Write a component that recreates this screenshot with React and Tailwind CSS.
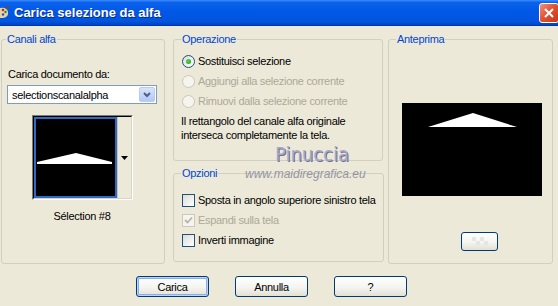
import React from "react";

function Radio({ checked, disabled, label }) {
  return (
    <div className="h-[20px] flex items-center whitespace-nowrap">
      <span
        className={
          disabled
            ? "ml-[1px] w-[13px] h-[13px] rounded-full border border-[#cac8bb] bg-[#f5f4ee]"
            : "ml-[1px] w-[13px] h-[13px] rounded-full border border-[#1c5180] bg-[linear-gradient(135deg,#dcdcd7,#ffffff)] flex items-center justify-center"
        }
      >
        {checked && <span className="w-[5px] h-[5px] rounded-full bg-[radial-gradient(circle_at_40%_40%,#55d655,#1a9a1a)]" />}
      </span>
      <span className={disabled ? "ml-[3px] text-[#aca899]" : "ml-[3px]"}>{label}</span>
    </div>
  );
}

function Check({ checked, disabled, label }) {
  return (
    <div className="h-[20px] flex items-center whitespace-nowrap">
      <span
        className={
          disabled
            ? "shrink-0 ml-[1px] w-[13px] h-[13px] border border-[#cac8bb] bg-[#f5f4ee] flex items-center justify-center"
            : "shrink-0 ml-[1px] w-[13px] h-[13px] border border-[#1c5180] bg-[linear-gradient(135deg,#dcdcd7,#ffffff)]"
        }
      >
        {checked && (
          <svg width="9" height="9" viewBox="0 0 9 9">
            <path d="M1 4 L3.5 6.5 L8 1.5" stroke="#b8b5a6" strokeWidth="1.8" fill="none" />
          </svg>
        )}
      </span>
      <span className={disabled ? "ml-[3px] text-[#aca899]" : "ml-[3px]"}>{label}</span>
    </div>
  );
}

function XpButton({ children, isDefault }) {
  return (
    <button
      className={
        "w-[73px] h-[21px] rounded-[3px] border border-[#003c74] bg-[linear-gradient(to_bottom,#ffffff,#f4f4f0_55%,#e3e0d4)] text-black " +
        (isDefault ? "shadow-[inset_0_0_0_1px_#bcd4f6,inset_0_0_0_2px_#89adf0]" : "")
      }
    >
      {children}
    </button>
  );
}

export default function App() {
  return (
    <div className="relative w-[558px] h-[306px] overflow-hidden bg-[#ece9d8] text-[11px] tracking-[-0.3px] leading-[14px] text-black font-['Liberation_Sans',Arial,sans-serif]">
      {/* title bar */}
      <div className="h-[26px] flex items-center bg-[linear-gradient(to_bottom,#3d8dfb_0%,#0a62ec_10%,#0058e6_45%,#0055e0_85%,#0042c4_100%)] border-b border-[#0039a8]">
        <svg width="10" height="14" viewBox="0 0 10 14" className="shrink-0">
          <path d="M0 2 Q7 1 8 6 Q9 11 3 12 L0 12 Z" fill="#e9d3a0" />
          <circle cx="3" cy="4" r="1.3" fill="#d02020" />
          <circle cx="5.5" cy="6" r="1.2" fill="#2a8a2a" />
          <circle cx="3" cy="8.5" r="1.2" fill="#2050d0" />
          <path d="M6 3 L9 0" stroke="#7a4a20" strokeWidth="1.4" />
        </svg>
        <span className="ml-[4px] text-white font-bold text-[13px] tracking-normal [text-shadow:1px_1px_0_#0a2a8a]">
          Carica selezione da alfa
        </span>
        <div className="ml-auto -mr-[1px] w-[20px] h-[20px] rounded-[3px] border border-white bg-[linear-gradient(135deg,#f0907a,#e0502e_50%,#c23a1c)] flex items-center justify-center">
          <svg width="12" height="12" viewBox="0 0 12 12">
            <path d="M2 2 L10 10 M10 2 L2 10" stroke="white" strokeWidth="2" />
          </svg>
        </div>
      </div>

      {/* groups */}
      <div className="flex pt-[6px]">
        <fieldset className="ml-[1px] w-[164px] h-[232px] border border-[#d0d0bf] rounded-[3px] px-[5px]">
          <legend className="text-[#0046d5] px-[1px] -ml-[1px]">Canali alfa</legend>
          <div className="mt-[21px] pl-[1px]">Carica documento da:</div>
          <div className="mt-[4px] w-[150px] h-[19px] border border-[#7f9db9] bg-white flex items-center">
            <span className="ml-[4px]">selectionscanalalpha</span>
            <span className="ml-auto mr-[1px] w-[16px] h-[15px] rounded-[2px] border border-[#b9cbf3] bg-[linear-gradient(to_bottom,#d8e4fd,#b4c8f6)] flex items-center justify-center">
              <svg width="8" height="6" viewBox="0 0 8 6">
                <path d="M1 1 L4 4 L7 1" stroke="#4d6185" strokeWidth="2" fill="none" />
              </svg>
            </span>
          </div>
          <div className="mt-[11px] ml-[25px] w-[101px] h-[85px] border border-t-[#7d7c75] border-l-[#7d7c75] border-b-white border-r-white">
            <div className="w-full h-full flex border border-t-black border-l-black border-b-[#d8d5c8] border-r-[#d8d5c8]">
              <div className="w-[83px] h-full bg-[#316ac5] p-[2px]">
                <div className="w-full h-full bg-black">
                  <svg width="79" height="77" viewBox="0 0 79 77">
                    <polygon points="1,43 40,34 76,43 76,45 1,45" fill="white" />
                  </svg>
                </div>
              </div>
              <div className="flex-1 border-l border-[#c8c5b8] flex items-center justify-center bg-[#ece9d8]">
                <svg width="7" height="4" viewBox="0 0 7 4">
                  <polygon points="0,0 7,0 3.5,4" fill="black" />
                </svg>
              </div>
            </div>
          </div>
          <div className="mt-[9px] w-[150px] text-center">Sélection #8</div>
        </fieldset>

        <div className="ml-[8px] w-[210px] flex flex-col gap-[5px]">
          <fieldset className="h-[129px] border border-[#d0d0bf] rounded-[3px] px-[7px]">
            <legend className="text-[#0046d5] px-[1px]">Operazione</legend>
            <div className="mt-[5px]">
              <Radio checked label="Sostituisci selezione" />
              <Radio disabled label="Aggiungi alla selezione corrente" />
              <Radio disabled label="Rimuovi dalla selezione corrente" />
            </div>
            <div className="mt-[3px] whitespace-nowrap">
              Il rettangolo del canale alfa originale
              <br />
              interseca completamente la tela.
            </div>
          </fieldset>
          <fieldset className="h-[96px] border border-[#d0d0bf] rounded-[3px] px-[7px]">
            <legend className="text-[#0046d5] px-[1px]">Opzioni</legend>
            <div className="mt-[10px]">
              <Check label="Sposta in angolo superiore sinistro tela" />
              <Check checked disabled label="Espandi sulla tela" />
              <Check label="Inverti immagine" />
            </div>
          </fieldset>
        </div>

        <fieldset className="ml-[5px] w-[165px] h-[232px] border border-[#d0d0bf] rounded-[3px] px-[7px]">
          <legend className="text-[#0046d5] px-[1px]">Anteprima</legend>
          <div className="mt-[57px] ml-[6px] w-[140px] h-[93px] bg-black">
            <svg width="140" height="93" viewBox="0 0 140 93">
              <polygon points="26,24 71,10 115,24" fill="white" />
            </svg>
          </div>
          <div className="mt-[36px] ml-[65px] w-[37px] h-[19px] rounded-[3px] border border-[#003c74] bg-[linear-gradient(to_bottom,#ffffff,#f4f4f0_55%,#e3e0d4)] flex items-center justify-center">
            <svg width="16" height="10" viewBox="0 0 16 10">
              <rect x="0" y="0" width="4" height="4" fill="#e6e6e6" />
              <rect x="8" y="0" width="4" height="4" fill="#e6e6e6" />
              <rect x="4" y="4" width="4" height="4" fill="#e6e6e6" />
              <rect x="12" y="4" width="4" height="4" fill="#e6e6e6" />
            </svg>
          </div>
        </fieldset>
      </div>

      {/* bottom buttons */}
      <div className="mt-[12px] pl-[136px] flex gap-[26px]">
        <XpButton isDefault>Carica</XpButton>
        <XpButton>Annulla</XpButton>
        <XpButton>?</XpButton>
      </div>

      {/* watermark */}
      <div className="absolute left-[275px] top-[143px] text-[20px] leading-[22px] tracking-[0px] text-[#a9a9c9] font-['DejaVu_Sans_Condensed','DejaVu_Sans',sans-serif] [text-shadow:1px_1px_0_#6e6e8e]">
        Pinuccia
      </div>
      <div className="absolute left-[245px] top-[167px] text-[12px] leading-[14px] tracking-[0px] italic text-[#9595a5]">
        www.maidiregrafica.eu
      </div>
    </div>
  );
}
